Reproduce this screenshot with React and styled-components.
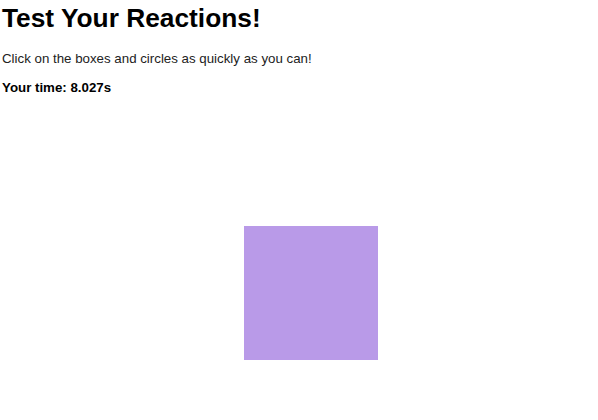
import React from 'react';
import styled, { createGlobalStyle } from 'styled-components';

const GlobalStyle = createGlobalStyle`
  body {
    margin: 0;
    padding: 0 2px;
    background: #fff;
    font-family: "Liberation Sans", Arial, sans-serif;
    color: #000;
  }
`;

const Title = styled.h1`
  font-size: 26.3px;
  font-weight: bold;
  margin: 0;
  padding-top: 2px;
  line-height: 32px;
`;

const Intro = styled.p`
  font-size: 13.3px;
  color: #222;
  margin: 17px 0 0;
  line-height: 16px;
`;

const Time = styled.p`
  font-size: 13.3px;
  font-weight: bold;
  margin: 13px 0 0;
  line-height: 16px;
`;

const Arena = styled.div`
  position: relative;
  height: 320px;
`;

const Target = styled.div`
  position: absolute;
  left: ${p => p.$x}px;
  top: ${p => p.$y}px;
  width: ${p => p.$size}px;
  height: ${p => p.$size}px;
  background: #b99ae8;
  border-radius: ${p => (p.$round ? '50%' : '0')};
  cursor: pointer;
`;

export default function App() {
  return (
    <>
      <GlobalStyle />
      <Title>Test Your Reactions!</Title>
      <Intro>Click on the boxes and circles as quickly as you can!</Intro>
      <Time>Your time: 8.027s</Time>
      <Arena>
        <Target $x={242} $y={130} $size={134} />
      </Arena>
    </>
  );
}
